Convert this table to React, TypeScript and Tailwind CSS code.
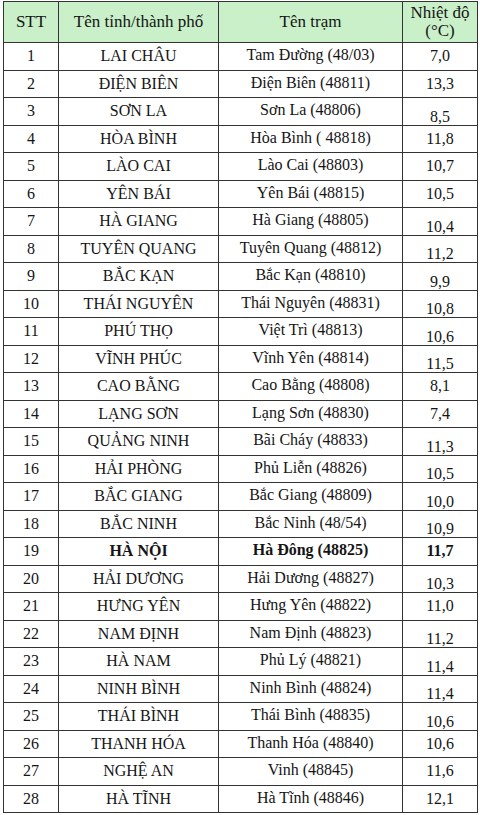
const ROWS: [string, string, string, boolean][] = [
  ["LAI CHÂU", "Tam Đường (48/03)", "7,0", false],
  ["ĐIỆN BIÊN", "Điện Biên (48811)", "13,3", false],
  ["SƠN LA", "Sơn La (48806)", "8,5", true],
  ["HÒA BÌNH", "Hòa Bình ( 48818)", "11,8", false],
  ["LÀO CAI", "Lào Cai (48803)", "10,7", false],
  ["YÊN BÁI", "Yên Bái (48815)", "10,5", false],
  ["HÀ GIANG", "Hà Giang (48805)", "10,4", true],
  ["TUYÊN QUANG", "Tuyên Quang (48812)", "11,2", true],
  ["BẮC KẠN", "Bắc Kạn (48810)", "9,9", true],
  ["THÁI NGUYÊN", "Thái Nguyên (48831)", "10,8", true],
  ["PHÚ THỌ", "Việt Trì (48813)", "10,6", true],
  ["VĨNH PHÚC", "Vĩnh Yên (48814)", "11,5", true],
  ["CAO BẰNG", "Cao Bằng (48808)", "8,1", false],
  ["LẠNG SƠN", "Lạng Sơn (48830)", "7,4", false],
  ["QUẢNG NINH", "Bãi Cháy (48833)", "11,3", true],
  ["HẢI PHÒNG", "Phủ Liễn (48826)", "10,5", true],
  ["BẮC GIANG", "Bắc Giang (48809)", "10,0", true],
  ["BẮC NINH", "Bắc Ninh (48/54)", "10,9", true],
  ["HÀ NỘI", "Hà Đông (48825)", "11,7", false],
  ["HẢI DƯƠNG", "Hải Dương (48827)", "10,3", true],
  ["HƯNG YÊN", "Hưng Yên (48822)", "11,0", false],
  ["NAM ĐỊNH", "Nam Định (48823)", "11,2", true],
  ["HÀ NAM", "Phủ Lý (48821)", "11,4", true],
  ["NINH BÌNH", "Ninh Bình (48824)", "11,4", true],
  ["THÁI BÌNH", "Thái Bình (48835)", "10,6", true],
  ["THANH HÓA", "Thanh Hóa (48840)", "10,6", false],
  ["NGHỆ AN", "Vinh (48845)", "11,6", false],
  ["HÀ TĨNH", "Hà Tĩnh (48846)", "12,1", false],
];

const cell = "border border-[#333] text-center p-0";

export default function App() {
  return (
    <div className="w-[480px] h-[815px] bg-white pt-px pl-[3px] [font-family:Liberation_Serif,Times_New_Roman,serif] text-[16px] text-[#151515] overflow-hidden">
      <table className="table-fixed border-collapse w-[474px]">
        <colgroup>
          <col className="w-[55px]" />
          <col className="w-[160px]" />
          <col className="w-[184px]" />
          <col className="w-[75px]" />
        </colgroup>
        <thead>
          <tr className="h-[41px] bg-[#c9f0c9] text-[17px]">
            <th className={`${cell} font-normal`}>STT</th>
            <th className={`${cell} font-normal`}>Tên tỉnh/thành phố</th>
            <th className={`${cell} font-normal`}>Tên trạm</th>
            <th className={`${cell} font-normal leading-[18px]`}>
              Nhiệt độ
              <br />
              (°C)
            </th>
          </tr>
        </thead>
        <tbody>
          {ROWS.map(([province, station, temp, low], i) => {
            const bold = province === "HÀ NỘI";
            return (
              <tr key={i} className={`h-[27.5px] ${bold ? "font-bold" : ""}`}>
                <td className={`${cell} font-normal leading-[20px]`}>{i + 1}</td>
                <td className={`${cell} leading-[20px]`}>{province}</td>
                <td className={`${cell} align-top pt-[2px] leading-[20px]`}>{station}</td>
                {low ? (
                  <td className={`${cell} align-bottom leading-[16px]`}>{temp}</td>
                ) : (
                  <td className={`${cell} leading-[20px]`}>{temp}</td>
                )}
              </tr>
            );
          })}
        </tbody>
      </table>
    </div>
  );
}
